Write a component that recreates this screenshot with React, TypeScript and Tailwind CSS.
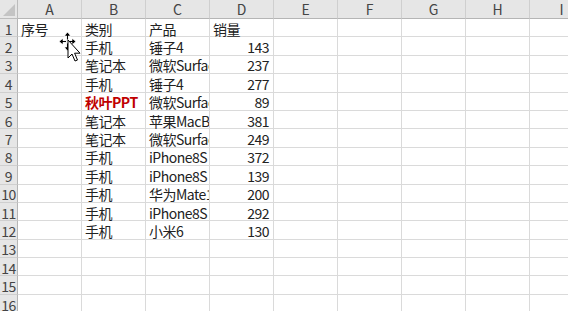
import React from 'react';

const cols = ['A', 'B', 'C', 'D', 'E', 'F', 'G', 'H', 'I'];

type Row = { b?: string; c?: string; d?: string; red?: boolean; head?: boolean };

const rows: Row[] = [
  { b: '类别', c: '产品', d: '销量', head: true },
  { b: '手机', c: '锤子4', d: '143' },
  { b: '笔记本', c: '微软Surface', d: '237' },
  { b: '手机', c: '锤子4', d: '277' },
  { b: '秋叶PPT', c: '微软Surface', d: '89', red: true },
  { b: '笔记本', c: '苹果MacBook', d: '381' },
  { b: '笔记本', c: '微软Surface', d: '249' },
  { b: '手机', c: 'iPhone8S', d: '372' },
  { b: '手机', c: 'iPhone8S', d: '139' },
  { b: '手机', c: '华为Mate10', d: '200' },
  { b: '手机', c: 'iPhone8S', d: '292' },
  { b: '手机', c: '小米6', d: '130' },
  {},
  {},
  {},
  {},
];

function Cursor() {
  return (
    <svg className="absolute left-[57px] top-[31px]" width="26" height="32" viewBox="0 0 26 32">
      {/* move cross */}
      <g fill="#000" stroke="#fff" strokeWidth="0.9" strokeLinejoin="round">
        <path d="M10.5 1 L14 5 L11.5 5 L11.5 9 L9.5 9 L9.5 5 L7 5 Z" />
        <path d="M2 10.5 L6 7 L6 9.5 L9.5 9.5 L9.5 11.5 L6 11.5 L6 14 Z" />
        <path d="M19 10.5 L15 7 L15 9.5 L11.5 9.5 L11.5 11.5 L15 11.5 L15 14 Z" />
        <path d="M10.5 20 L7 16 L9.5 16 L9.5 12 L11.5 12 L11.5 16 L14 16 Z" />
      </g>
      {/* arrow */}
      <path
        d="M11 9 L11 27 L15 23 L18 30 L20.5 29 L17.6 22.2 L23 22.2 Z"
        fill="#fff"
        stroke="#000"
        strokeWidth="1"
        strokeLinejoin="round"
      />
    </svg>
  );
}

const cell =
  'flex items-center border-r border-b border-[#dadada] pt-[2px] leading-[16px] whitespace-nowrap overflow-x-clip tracking-[-0.5px]';

export default function App() {
  return (
    <div
      className="relative w-[568px] h-[311px] overflow-hidden bg-white text-[14px] text-[#222]"
      style={{ fontFamily: '"Noto Sans CJK SC", "Noto Sans", sans-serif' }}
    >
      <div className="grid grid-cols-[18px_repeat(9,64px)] grid-rows-[19px_repeat(16,18.4px)]">
        {/* corner */}
        <div className="relative bg-[#e6e6e6] border-r border-b border-[#bcbcbc]">
          <div className="absolute right-[2px] bottom-[2px] w-0 h-0 border-l-[12px] border-l-transparent border-b-[12px] border-b-[#c4c4c4]" />
        </div>
        {cols.map((c) => (
          <div
            key={c}
            className="flex items-center justify-center bg-[#e6e6e6] border-r border-b border-r-[#cfcfcf] border-b-[#b5b5b5] text-[#444] leading-[16px]"
          >
            {c}
          </div>
        ))}

        {rows.map((r, i) => (
          <React.Fragment key={i}>
            <div className="flex items-center justify-center bg-[#e6e6e6] border-r border-b border-r-[#b5b5b5] border-b-[#cfcfcf] text-[#444] leading-[16px] pt-[2px] tracking-[-0.5px]">
              {i + 1}
            </div>
            {/* A */}
            <div className={`${cell} pl-[3px]`}>{i === 0 ? '序号' : ''}</div>
            {/* B */}
            <div className={`${cell} pl-[3px] ${r.red ? 'text-[#c00000] font-bold' : ''}`}>{r.b ?? ''}</div>
            {/* C */}
            <div className={`${cell} pl-[3px]`}>{r.c ?? ''}</div>
            {/* D */}
            <div className={`${cell} ${r.head ? 'justify-start pl-[3px]' : 'justify-end pr-[4px]'}`}>{r.d ?? ''}</div>
            {cols.slice(4).map((c) => (
              <div key={c} className="border-r border-b border-[#dadada]" />
            ))}
          </React.Fragment>
        ))}
      </div>
      <Cursor />
    </div>
  );
}
